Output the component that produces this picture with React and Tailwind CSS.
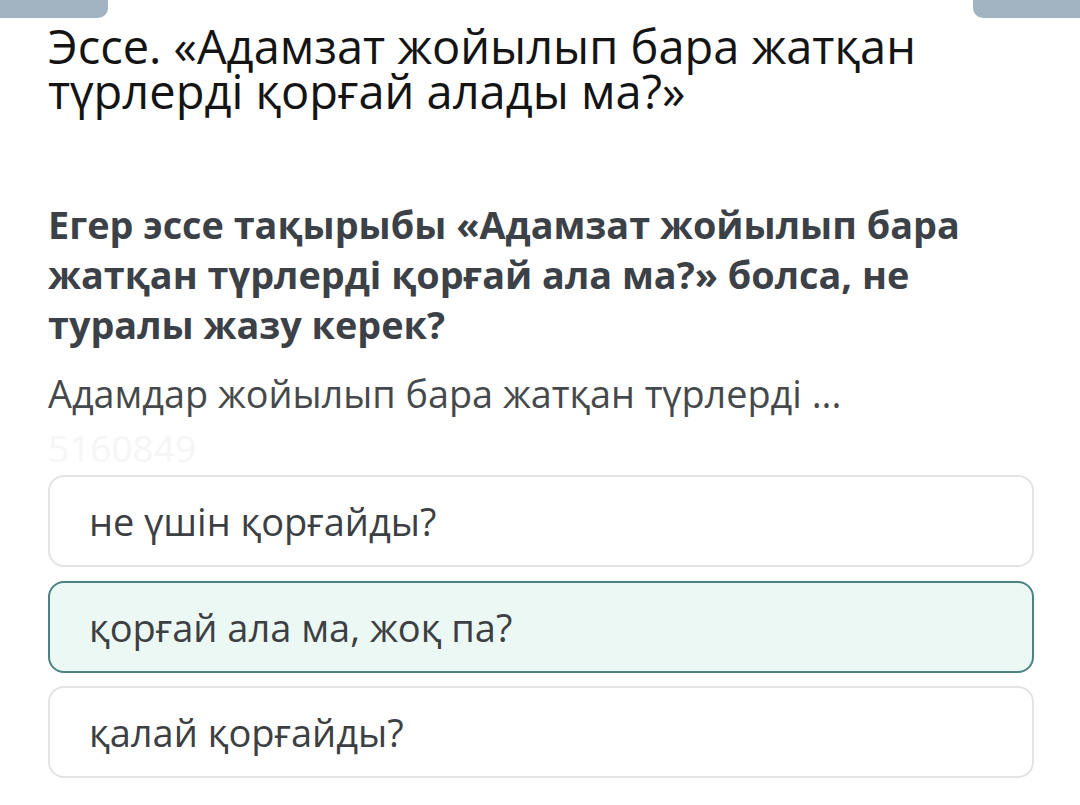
export default function App() {
  const font = { fontFamily: '"Open Sans", "Noto Sans", sans-serif' };
  return (
    <div className="w-[1080px] h-[805px] bg-white overflow-hidden" style={font}>
      <div className="flex justify-between h-[18px]">
        <div className="w-[108px] h-full bg-[#a2b4c1] rounded-br-[10px]" />
        <div className="w-[107px] h-full bg-[#a2b4c1] rounded-bl-[10px]" />
      </div>
      <div className="pl-[48px] pr-[46px]">
        <h1 className="mt-[6px] text-[47px] leading-[45px] text-[#141414] font-normal">
          <span className="block">Эссе. «Адамзат жойылып бара жатқан</span>
          <span className="block">түрлерді қорғай алады ма?»</span>
        </h1>
        <p className="mt-[86px] text-[37.8px] leading-[50px] font-bold text-[#3b4147]">
          Егер эссе тақырыбы «Адамзат жойылып бара жатқан түрлерді қорғай ала ма?» болса, не туралы жазу керек?
        </p>
        <p className="mt-[22px] text-[37.8px] leading-[44px] text-[#46494c]">
          Адамдар жойылып бара жатқан түрлерді ...
        </p>
        <p className="mt-[10px] text-[37px] leading-[44px] text-[#f6f6f6]">5160849</p>
        <div className="mt-[5px] flex flex-col">
          <div className="h-[92px] rounded-[16px] border-2 border-[#e3e3e3] bg-white flex items-center pl-[39px] text-[38px] text-[#3c4043]">
            не үшін қорғайды?
          </div>
          <div className="mt-[14px] h-[92px] rounded-[16px] border-2 border-[#4b8283] bg-[#ecf8f4] flex items-center pl-[39px] text-[38px] text-[#3c4043]">
            қорғай ала ма, жоқ па?
          </div>
          <div className="mt-[13px] h-[92px] rounded-[16px] border-2 border-[#e3e3e3] bg-white flex items-center pl-[39px] text-[38px] text-[#3c4043]">
            қалай қорғайды?
          </div>
        </div>
      </div>
    </div>
  );
}
